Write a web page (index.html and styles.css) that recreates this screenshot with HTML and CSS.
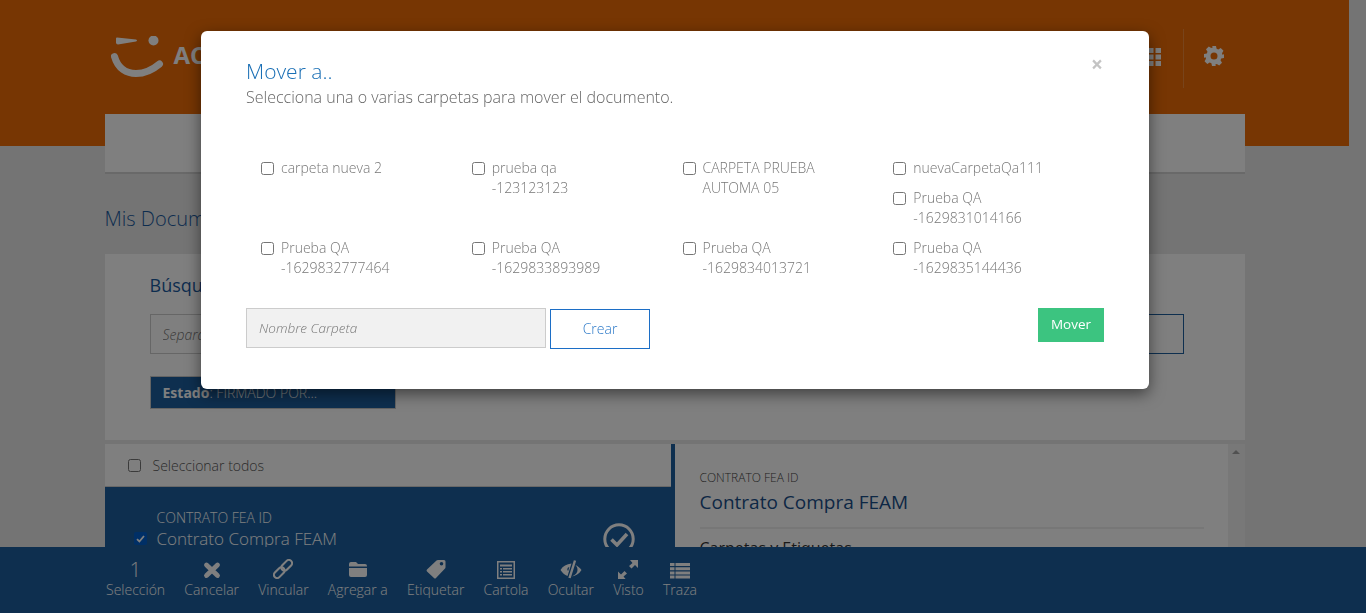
FILE: index.html
```html
<!DOCTYPE html>
<html lang="es">
<head>
    <meta charset="UTF-8">
    <title>Mis Documentos</title>
    <link rel="stylesheet" href="styles.css">
</head>
<body>
    <div class="page">
        <header class="header">
            <div class="header-inner">
                <div class="logo">
                    <svg width="54" height="44" viewBox="0 0 54 44">
                        <path d="M3.500 20.500C7 33 16 37.500 25 37.500C34 37.500 42 33.500 48.500 28" fill="none" stroke="#fff" stroke-width="7" stroke-linecap="round"/>
                        <path d="M6 1.500L25 3.500Q27 4.500 25 5.500L7 8.500Q5 8.500 5 6.500V2.500Q5 1.500 6 1.500Z" fill="#fff"/>
                        <circle cx="42.500" cy="4.500" r="5" fill="#fff"/>
                    </svg>
                    <span class="logo-text">ACEPTA</span>
                </div>
                <div class="header-tools">
                    <svg class="tool-grid" width="13" height="18" viewBox="0 0 13 18">
                        <path d="M0 0h5.500v5h-5.500zM7.500 0h5.500v5h-5.500zM0 6.500h5.500v5h-5.500zM7.500 6.500h5.500v5h-5.500zM0 13h5.500v5h-5.500zM7.500 13h5.500v5h-5.500z" fill="#fff"/>
                    </svg>
                    <span class="tool-sep"></span>
                    <svg class="tool-gear" width="20" height="20" viewBox="0 0 20 20">
                        <path fill="#fff" fill-rule="evenodd" d="M8 0h4l.6 2.800 1.700.7 2.400-1.500 2.800 2.800-1.500 2.400.7 1.700L20 8v4l-2.800.6-.7 1.700 1.500 2.400-2.800 2.800-2.400-1.500-1.700.7L12 20H8l-.6-2.800-1.700-.7-2.400 1.500-2.800-2.800 1.500-2.400-.7-1.700L0 12V8l2.800-.6.7-1.700L2 3.300 4.800.500l2.400 1.500 1.700-.7zM10 6.500a3.500 3.500 0 1 0 0 7 3.500 3.500 0 0 0 0-7z"/>
                    </svg>
                </div>
            </div>
        </header>

        <main class="container">
            <div class="nav-card"></div>
            <h2 class="page-title">Mis Documentos</h2>

            <section class="search-card">
                <h3 class="search-title">Búsqueda</h3>
                <div class="search-row">
                    <input class="search-input" type="text" placeholder="Separa tus términos de búsqueda">
                    <button class="search-btn" type="button">Buscar</button>
                </div>
                <div class="filter-tag"><b>Estado</b>: FIRMADO POR...</div>
            </section>

            <section class="split">
                <div class="list">
                    <label class="select-all"><input type="checkbox"> Seleccionar todos</label>
                    <div class="doc-item">
                        <span class="doc-check"><svg width="9" height="8" viewBox="0 0 9 8"><path d="M1 4.200L3.400 6.500L8 1" fill="none" stroke="#fff" stroke-width="1.800"/></svg></span>
                        <div class="doc-text">
                            <div class="doc-type">CONTRATO FEA ID</div>
                            <div class="doc-name">Contrato Compra FEAM</div>
                        </div>
                        <svg class="doc-ok" width="32" height="32" viewBox="0 0 32 32">
                            <circle cx="16" cy="16" r="14.200" fill="none" stroke="#fff" stroke-width="3"/>
                            <path d="M8.500 16.500L14 22L24 11" fill="none" stroke="#fff" stroke-width="3.600"/>
                        </svg>
                    </div>
                </div>
                <div class="detail">
                    <div class="detail-type">CONTRATO FEA ID</div>
                    <div class="detail-name">Contrato Compra FEAM</div>
                    <div class="detail-head">Carpetas y Etiquetas</div>
                </div>
                <div class="scroll-track"><span class="scroll-up"></span></div>
            </section>
        </main>
    </div>

    <nav class="action-bar">
        <div class="action"><span class="action-count">1</span>Selección</div>
        <div class="action">
            <svg width="20" height="20" viewBox="0 0 20 20"><path fill="none" stroke="#fff" stroke-width="4.800" stroke-linecap="round" d="M4.500 6L15.500 16.500M15.500 6L4.500 16.500"/></svg>
            Cancelar
        </div>
        <div class="action">
            <svg width="20" height="20" viewBox="0 0 20 20">
                <g transform="rotate(-45 10 10)" fill="none" stroke="#fff" stroke-width="2.100">
                    <rect x="-1.500" y="6.800" width="12.500" height="6.400" rx="3.200"/>
                    <rect x="9" y="6.800" width="12.500" height="6.400" rx="3.200"/>
                </g>
            </svg>
            Vincular
        </div>
        <div class="action">
            <svg width="20" height="20" viewBox="0 0 20 20"><path fill="#fff" d="M1 5Q1 3 3 3H8L10 5H17Q19 5 19 7V7.500H1zM1 9H19V16Q19 18 17 18H3Q1 18 1 16z"/></svg>
            Agregar a
        </div>
        <div class="action">
            <svg width="20" height="20" viewBox="0 0 20 20"><path fill="#fff" fill-rule="evenodd" d="M12 1H18Q19.500 1 19.500 2.500V8Q19.500 9 19 9.500L10 19Q9 20 8 19L1 12.500Q0 11.500 1 10.500L10.500 1.500Q11 1 12 1zM15.500 3a1.800 1.800 0 1 0 0 3.600 1.800 1.800 0 0 0 0-3.600z"/></svg>
            Etiquetar
        </div>
        <div class="action">
            <svg width="20" height="20" viewBox="0 -1 20 20"><path fill="#fff" fill-rule="evenodd" d="M1 1h18v18H1zM2.500 2.500v15h15v-15zM4 4.500h12v2H4zM4 8h2v1.500H4zM7 8h9v1.500H7zM4 11h2v1.500H4zM7 11h9v1.500H7zM4 14h2v1.500H4zM7 14h9v1.500H7z"/></svg>
            Cartola
        </div>
        <div class="action">
            <svg width="22" height="20" viewBox="0 0 22 20">
                <path fill="#fff" fill-rule="evenodd" d="M.5 11C3 7 6.500 5 11.500 4.500L7.500 17C4.500 16 2.500 14 .5 11ZM9.300 8Q7.300 8.300 7.300 10.300Q7.300 11.500 8.200 12Z"/>
                <path fill="none" stroke="#fff" stroke-width="2.400" d="M15 1.500L9.500 19"/>
                <path fill="#fff" d="M15.500 6C18 7 20 9 21.500 11C19 15 15.500 17 12 17.500C16 15.500 17.500 13.500 17.500 11C17.500 9 16.800 7.500 15.500 6Z"/>
            </svg>
            Ocultar
        </div>
        <div class="action">
            <svg width="20" height="20" viewBox="0 -1 20 20"><path fill="#fff" d="M12 0h8v8l-3-3-3.500 3.500-2.500-2.500L14.500 3zM8 19.500H0v-8l3 3 3.500-3.500 2.500 2.500L5.500 16.500z"/></svg>
            Visto
        </div>
        <div class="action">
            <svg width="20" height="20" viewBox="0 -2 20 20"><path fill="#fff" d="M0 2h4.500v3H0zM5.500 2H20v3H5.500zM0 6.200h4.500v3H0zM5.500 6.200H20v3H5.500zM0 10.400h4.500v3H0zM5.500 10.400H20v3H5.500zM0 14.600h4.500v3H0zM5.500 14.600H20v3H5.500z"/></svg>
            Traza
        </div>
    </nav>

    <div class="backdrop"></div>

    <div class="modal">
        <span class="modal-close">×</span>
        <h4 class="modal-title">Mover a..</h4>
        <p class="modal-sub">Selecciona una o varias carpetas para mover el documento.</p>

        <div class="folders">
            <div class="folder-cell">
                <label class="folder"><input type="checkbox"><span>carpeta nueva 2</span></label>
            </div>
            <div class="folder-cell">
                <label class="folder"><input type="checkbox"><span>prueba qa<br>-123123123</span></label>
            </div>
            <div class="folder-cell">
                <label class="folder"><input type="checkbox"><span>CARPETA PRUEBA<br>AUTOMA 05</span></label>
            </div>
            <div class="folder-cell">
                <label class="folder"><input type="checkbox"><span>nuevaCarpetaQa111</span></label>
                <label class="folder"><input type="checkbox"><span>Prueba QA<br>-1629831014166</span></label>
            </div>
            <div class="folder-cell">
                <label class="folder"><input type="checkbox"><span>Prueba QA<br>-1629832777464</span></label>
            </div>
            <div class="folder-cell">
                <label class="folder"><input type="checkbox"><span>Prueba QA<br>-1629833893989</span></label>
            </div>
            <div class="folder-cell">
                <label class="folder"><input type="checkbox"><span>Prueba QA<br>-1629834013721</span></label>
            </div>
            <div class="folder-cell">
                <label class="folder"><input type="checkbox"><span>Prueba QA<br>-1629835144436</span></label>
            </div>
        </div>

        <div class="modal-foot">
            <input class="folder-name" type="text" placeholder="Nombre Carpeta">
            <button class="btn-create" type="button">Crear</button>
            <button class="btn-move" type="button">Mover</button>
        </div>
    </div>
</body>
</html>
```

FILE: styles.css
```css
html, body {
    margin: 0;
    padding: 0;
    height: 100%;
    overflow: hidden;
    background-color: #e8e8e8;
    font-family: "Open Sans", sans-serif;
}

.page {
    width: 1349px;
    height: 613px;
    overflow: hidden;
}

.header {
    height: 146px;
    background-color: #ee6c06;
}

.header-inner {
    width: 1140px;
    margin: 0 auto;
    display: flex;
    justify-content: space-between;
    box-sizing: border-box;
    padding: 36px 21px 0 6px;
}

.logo {
    display: flex;
    align-items: center;
    gap: 9px;
    height: 44px;
}

.logo-text {
    margin-bottom: 8px;
    color: #fff;
    font-size: 24px;
    font-weight: 700;
}

.header-tools {
    display: flex;
    align-items: center;
    height: 59px;
    margin-top: -7px;
}

.tool-grid {
    margin-bottom: 3px;
}

.tool-gear {
    margin-bottom: 5px;
}

.tool-sep {
    width: 1px;
    height: 59px;
    margin: 0 20px 0 22px;
    background-color: rgba(255, 255, 255, 0.2);
}

.container {
    width: 1140px;
    margin: 0 auto;
}

.nav-card {
    height: 58px;
    margin-top: -32px;
    background-color: #fff;
    border-bottom: 2px solid #d2d2d2;
}

.page-title {
    margin: 31px 0 22px;
    font-size: 20px;
    line-height: 27px;
    font-weight: 300;
    color: #1a5a9e;
}

.search-card {
    height: 186px;
    box-sizing: border-box;
    padding: 19px 61px 0 45px;
    background-color: #fff;
}

.search-title {
    margin: 0 0 17px;
    font-size: 18px;
    line-height: 24px;
    font-weight: 400;
    color: #1a5a9e;
}

.search-row {
    display: flex;
    justify-content: space-between;
    height: 40px;
}

.search-input {
    width: 400px;
    box-sizing: border-box;
    padding: 0 12px;
    background-color: #fff;
    border: 1px solid #ccc;
    font-family: inherit;
    font-style: italic;
    font-weight: 300;
    font-size: 14px;
}

.search-btn {
    width: 200px;
    background-color: #fff;
    border: 1px solid #1c5f9f;
    color: #1c5f9f;
    font-family: inherit;
}

.filter-tag {
    width: 246px;
    height: 33px;
    margin-top: 22px;
    box-sizing: border-box;
    padding-left: 12px;
    background-color: #1c5f9f;
    border: 1px solid #c8c8c8;
    color: #fff;
    font-size: 14px;
    line-height: 32px;
    font-weight: 300;
}

.filter-tag b {
    font-weight: 700;
}

.split {
    display: flex;
    height: 200px;
    margin-top: 4px;
    background-color: #fff;
}

.list {
    width: 566px;
    border-right: 4px solid #1c5f9f;
}

.select-all {
    display: flex;
    align-items: center;
    height: 41px;
    padding: 1px 0 0 23px;
    gap: 12px;
    background-color: #fff;
    border-bottom: 1px solid #d0d0d0;
    color: #555;
    font-size: 14px;
    font-weight: 300;
}

.select-all input, .folder input {
    width: 13px;
    height: 13px;
    margin: 0;
}

.doc-item {
    display: flex;
    height: 100px;
    box-sizing: border-box;
    padding: 22px 36px 0 29px;
    background-color: #1c5f9f;
    color: #fff;
}

.doc-check {
    width: 13px;
    height: 13px;
    margin-top: 23px;
    border-radius: 2px;
    background-color: #005fcc;
    display: flex;
    align-items: center;
    justify-content: center;
}

.doc-text {
    flex: 1;
    margin-left: 10px;
}

.doc-type {
    font-size: 14px;
    line-height: 17px;
    font-weight: 300;
}

.doc-name {
    margin-top: 2px;
    font-size: 17px;
    line-height: 22px;
    font-weight: 300;
}

.doc-ok {
    margin-top: 14px;
}

.detail {
    flex: 1;
    padding: 26px 24px 0 25px;
}

.detail-type {
    font-size: 12px;
    line-height: 16px;
    font-weight: 300;
    color: #444;
}

.detail-name {
    margin-top: 4px;
    padding-bottom: 13px;
    border-bottom: 2px solid #eee;
    font-size: 19px;
    line-height: 24px;
    color: #1a4f8a;
}

.detail-head {
    margin-top: 8px;
    font-size: 16px;
    line-height: 22px;
    color: #333;
}

.scroll-track {
    width: 17px;
    background-color: #f1f1f1;
    display: flex;
    justify-content: center;
}

.scroll-up {
    width: 0;
    height: 0;
    margin-top: 6px;
    border: 4px solid transparent;
    border-top: 0;
    border-bottom-color: #a3a3a3;
}

.action-bar {
    position: fixed;
    left: 0;
    right: 0;
    bottom: 0;
    height: 66px;
    box-sizing: border-box;
    display: flex;
    gap: 19.150px;
    padding: 12px 0 0 106px;
    background-color: #1c5f9f;
    color: #fff;
    font-size: 14px;
    font-weight: 300;
}

.action {
    display: flex;
    flex-direction: column;
    align-items: center;
    line-height: 20px;
}

.action svg {
    display: block;
    height: 20px;
    margin-bottom: 1px;
}

.action-count {
    height: 21px;
    font-size: 20px;
    line-height: 21px;
}

.backdrop {
    position: fixed;
    top: 0;
    left: 0;
    right: 0;
    bottom: 0;
    background-color: rgba(0, 0, 0, 0.5);
}

.modal {
    position: absolute;
    top: 31px;
    left: 201px;
    width: 948px;
    height: 358px;
    box-sizing: border-box;
    padding: 27px 45px 0;
    background-color: #fff;
    border-radius: 6px;
    box-shadow: 0 5px 15px rgba(0, 0, 0, 0.5);
}

.modal-close {
    position: absolute;
    top: 23px;
    right: 46px;
    color: #c4c4c4;
    font-size: 21px;
    line-height: 21px;
    font-weight: 700;
}

.modal-title {
    margin: 0 0 2px;
    font-size: 21px;
    line-height: 26px;
    font-weight: 300;
    color: #1a6fb5;
}

.modal-sub {
    margin: 0;
    font-size: 16px;
    line-height: 22px;
    font-weight: 300;
    color: #666;
}

.folders {
    display: grid;
    grid-template-columns: repeat(4, 1fr);
    grid-template-rows: 80px 50px;
    margin: 50px 0 0;
    padding: 0 0 0 15px;
}

.folder {
    display: flex;
    height: auto;
    margin-bottom: 10px;
    color: #777;
    font-size: 14px;
    line-height: 20px;
    font-weight: 300;
}

.folder input {
    flex: none;
    margin: 4px 7px 0 0;
}

.modal-foot {
    display: flex;
    align-items: flex-start;
    margin-top: 20px;
}

.folder-name {
    width: 300px;
    height: 40px;
    box-sizing: border-box;
    padding: 0 12px;
    background-color: #f1f1f1;
    border: 1px solid #ccc;
    font-family: inherit;
    font-size: 13.500px;
    font-weight: 300;
    font-style: italic;
}

.folder-name::placeholder {
    color: #777;
}

.btn-create {
    width: 100px;
    height: 40px;
    margin: 1px 0 0 4px;
    padding: 0 0 2px;
    background-color: #fff;
    border: 1px solid #1c6ec6;
    color: #2a78c8;
    font-family: inherit;
    font-size: 14px;
    font-weight: 300;
}

.btn-move {
    width: 66px;
    height: 34px;
    margin-left: auto;
    padding: 0 0 2px;
    background-color: #3cc480;
    border: none;
    color: #fff;
    font-family: inherit;
    font-size: 13.500px;
}
```
